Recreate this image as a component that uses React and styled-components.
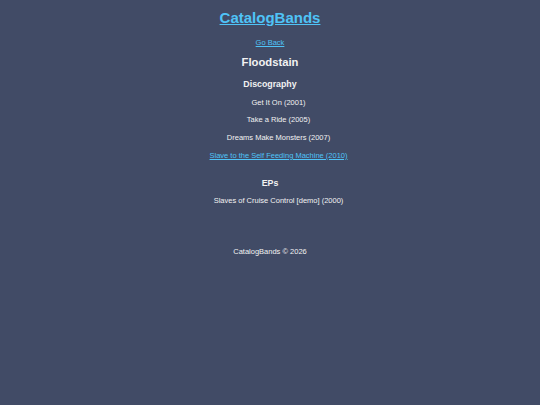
import React from "react";
import styled, { createGlobalStyle } from "styled-components";

const GlobalStyle = createGlobalStyle`
  html, body {
    margin: 0;
    padding: 0;
    background: #414b66;
    font-family: "Liberation Sans", Arial, sans-serif;
    color: #f2f2f2;
  }
`;

const Page = styled.div`
  min-height: 405px;
  display: flex;
  flex-direction: column;
  align-items: center;
  text-align: center;
  padding-top: 9px;
  box-sizing: border-box;
`;

const Link = styled.a`
  color: #4fc3f7;
  text-decoration: underline;
  cursor: pointer;
`;

const Title = styled.h1`
  margin: 0;
  font-size: 15px;
  line-height: 18px;
  font-weight: bold;
`;

const Back = styled.div`
  margin-top: 10.5px;
  font-size: 7.5px;
  line-height: 9px;
`;

const BandName = styled.h2`
  margin: 9px 0 0;
  font-size: 11.25px;
  line-height: 13px;
  font-weight: bold;
`;

const Section = styled.h3`
  margin: ${(p) => p.$top}px 0 0;
  font-size: 8.8px;
  line-height: 10px;
  font-weight: bold;
`;

const List = styled.ul`
  list-style: none;
  margin: ${(p) => p.$top}px 0 0;
  padding: 0 0 0 17px;
  display: flex;
  flex-direction: column;
  align-items: center;
  gap: 8.7px;
`;

const Item = styled.li`
  font-size: 7.5px;
  line-height: 9px;
`;

const Footer = styled.footer`
  margin-top: 42px;
  font-size: 7.5px;
  line-height: 9px;
  color: #f2f2f2;
`;

const albums = [
  { name: "Get It On (2001)" },
  { name: "Take a Ride (2005)" },
  { name: "Dreams Make Monsters (2007)" },
  { name: "Slave to the Self Feeding Machine (2010)", link: true },
];

const eps = [{ name: "Slaves of Cruise Control [demo] (2000)" }];

const App = () => {
  return (
    <>
      <GlobalStyle />
      <Page>
        <Title>
          <Link>CatalogBands</Link>
        </Title>
        <Back>
          <Link>Go Back</Link>
        </Back>
        <BandName>Floodstain</BandName>
        <Section $top={10.5}>Discography</Section>
        <List $top={8.5}>
          {albums.map((a) => (
            <Item key={a.name}>{a.link ? <Link>{a.name}</Link> : a.name}</Item>
          ))}
        </List>
        <Section $top={18.5}>EPs</Section>
        <List $top={7.5}>
          {eps.map((a) => (
            <Item key={a.name}>{a.name}</Item>
          ))}
        </List>
        <Footer>CatalogBands © 2026</Footer>
      </Page>
    </>
  );
};

export default App;
